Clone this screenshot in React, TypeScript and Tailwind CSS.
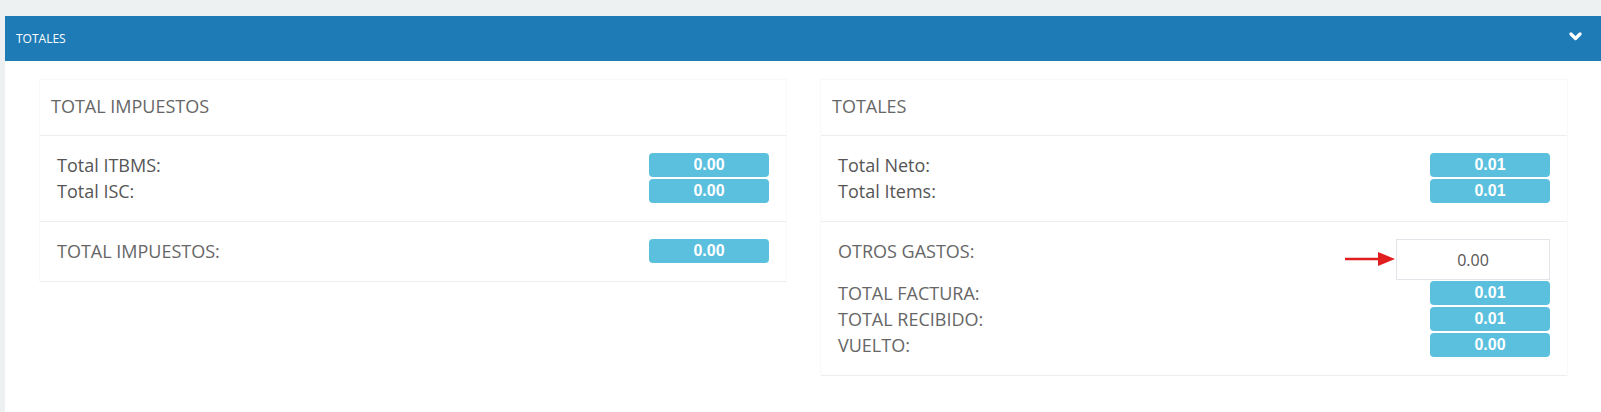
import React from 'react';

const Badge = ({ value }: { value: string }) => (
  <span className="flex h-6 w-[120px] items-center justify-center rounded-[4px] bg-[#5bc0de] font-['Liberation_Sans',Arial,sans-serif] text-[16px] font-bold leading-none text-white">
    {value}
  </span>
);

const Row = ({ label, value, upper }: { label: string; value: string; upper?: boolean }) => (
  <div className="flex h-[26px] items-center justify-between">
    <span className={upper ? 'text-[#666]' : 'text-[#555]'}>{label}</span>
    <Badge value={value} />
  </div>
);

const Panel = ({ title, children }: { title: string; children: React.ReactNode }) => (
  <div className="border-x border-t border-[#f9f9f9] font-['Open_Sans',sans-serif] text-[18px] leading-[26px]">
    <div className="border-b border-[#eeeeee] pl-[11px] pr-3 pt-[13px] pb-4 text-[#666]">{title}</div>
    {children}
  </div>
);

const Section = ({ children }: { children: React.ReactNode }) => (
  <div className="border-b border-[#eeeeee] px-[17px] pt-4 pb-[17px]">{children}</div>
);

export default function App() {
  return (
    <div className="flex h-[412px] flex-col bg-[#eef1f2] pt-4 pl-[5px]">
      {/* Portlet header */}
      <div className="flex h-[45px] items-center justify-between bg-[#1f7bb6] pl-[11px] pr-[19px]">
        <span className="font-['Open_Sans',sans-serif] text-[12px] text-white">TOTALES</span>
        <svg width="13" height="9" viewBox="0 0 13 9" className="-mt-1">
          <polyline points="2,2 6.5,6.5 11,2" fill="none" stroke="#fff" strokeWidth="3.2" strokeLinecap="round" strokeLinejoin="round" />
        </svg>
      </div>

      {/* Body */}
      <div className="grid flex-1 grid-cols-2 items-start gap-[33px] bg-white pt-[18px] pl-[34px] pr-[33px]">
        <Panel title="TOTAL IMPUESTOS">
          <Section>
            <Row label="Total ITBMS:" value="0.00" />
            <Row label="Total ISC:" value="0.00" />
          </Section>
          <Section>
            <Row label="TOTAL IMPUESTOS:" value="0.00" upper />
          </Section>
        </Panel>

        <Panel title="TOTALES">
          <Section>
            <Row label="Total Neto:" value="0.01" />
            <Row label="Total Items:" value="0.01" />
          </Section>
          <Section>
            <div className="flex items-start justify-between">
              <span className="text-[#666]">OTROS GASTOS:</span>
              <div className="relative mt-px">
                <svg width="50" height="16" viewBox="0 0 50 16" className="absolute top-[12px] right-full mr-px">
                  <line x1="0" y1="8" x2="36" y2="8" stroke="#e01e1e" strokeWidth="2.5" />
                  <polygon points="33,1 50,8 33,15" fill="#e01e1e" />
                </svg>
                <input
                  readOnly
                  value="0.00"
                  className="h-[41px] w-[154px] border border-[#e1e5ea] bg-white text-center font-['Open_Sans',sans-serif] text-[16px] text-[#555] outline-none"
                />
              </div>
            </div>
            <Row label="TOTAL FACTURA:" value="0.01" upper />
            <Row label="TOTAL RECIBIDO:" value="0.01" upper />
            <Row label="VUELTO:" value="0.00" upper />
          </Section>
        </Panel>
      </div>
    </div>
  );
}
